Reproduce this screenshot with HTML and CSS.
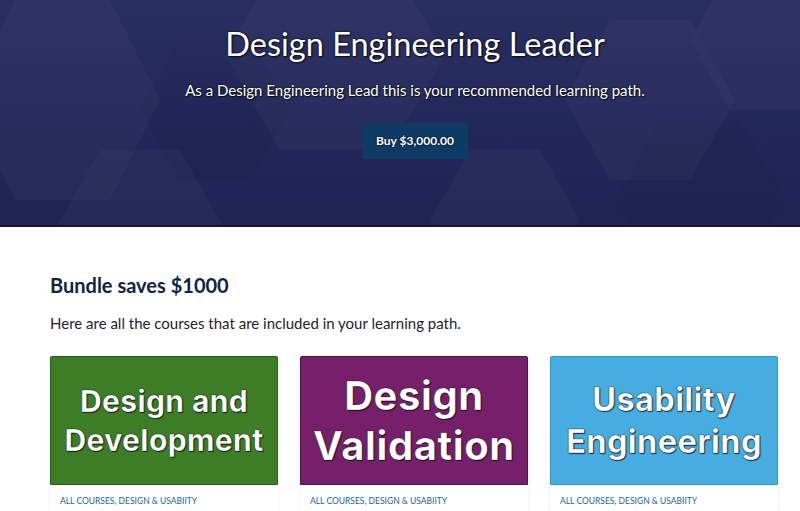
FILE: index.html
```html
<!DOCTYPE html>
<html lang="en">
<head>
<meta charset="utf-8">
<title>Design Engineering Leader</title>
<link rel="stylesheet" href="styles.css">
</head>
<body>
<header class="hero">
  <svg class="hero-bg" width="800" height="226" viewBox="0 0 800 226" aria-hidden="true">
    <g fill="#ffffff" fill-opacity="0.022">
      <polygon points="15,0 110,0 160,100 110,200 15,200 -35,100"/>
      <polygon points="280,-40 390,-40 445,55 390,150 280,150 225,55"/>
      <polygon points="100,150 180,150 225,230 180,310 100,310 55,230"/>
      <polygon points="610,20 690,20 735,100 690,180 610,180 565,100"/>
      <polygon points="470,150 540,150 580,220 540,290 470,290 430,220"/>
      <polygon points="730,-30 800,-30 840,40 800,110 730,110 690,40"/>
    </g>
    <g fill="#000000" fill-opacity="0.035">
      <polygon points="180,40 250,40 290,110 250,180 180,180 140,110"/>
      <polygon points="660,120 740,120 785,200 740,280 660,280 615,200"/>
    </g>
  </svg>
  <div class="hero-inner">
    <h1 class="hero-title">Design Engineering Leader</h1>
    <p class="hero-sub">As a Design Engineering Lead this is your recommended learning path.</p>
    <a class="buy-btn" href="#">Buy $3,000.00</a>
  </div>
</header>

<main class="content">
  <h2 class="bundle-title">Bundle saves $1000</h2>
  <p class="bundle-text">Here are all the courses that are included in your learning path.</p>

  <div class="cards">
    <article class="card">
      <div class="card-img green"><span class="img-text t1">Design and<br>Development</span></div>
      <div class="card-body"><a class="cat" href="#">ALL COURSES, DESIGN &amp; USABIITY</a></div>
    </article>
    <article class="card">
      <div class="card-img purple"><span class="img-text t2">Design<br>Validation</span></div>
      <div class="card-body"><a class="cat" href="#">ALL COURSES, DESIGN &amp; USABIITY</a></div>
    </article>
    <article class="card">
      <div class="card-img blue"><span class="img-text t3">Usability<br>Engineering</span></div>
      <div class="card-body"><a class="cat" href="#">ALL COURSES, DESIGN &amp; USABIITY</a></div>
    </article>
  </div>
</main>
</body>
</html>
```

FILE: styles.css
```css
* { box-sizing: border-box; }
html, body { margin: 0; padding: 0; }
body {
  font-family: Lato, "Liberation Sans", sans-serif;
  background: #ffffff;
  color: #1b2533;
  overflow: hidden;
}

.hero {
  position: relative;
  height: 227px;
  background: linear-gradient(180deg, #2a2f62 0%, #23285a 55%, #1f2453 100%);
  border-bottom: 2px solid #14173a;
  overflow: hidden;
}
.hero-bg {
  position: absolute;
  left: 0;
  top: 0;
}
.hero-inner {
  position: relative;
  display: flex;
  flex-direction: column;
  align-items: center;
  padding-top: 24px;
  padding-left: 30px;
}
.hero-title {
  margin: 0;
  font-weight: 400;
  font-size: 32.5px;
  line-height: 40px;
  color: #ffffff;
  text-shadow: 0 0 2px #000, 1px 1px 2px rgba(0,0,0,0.7);
}
.hero-sub {
  margin: 15px 0 0;
  font-size: 15px;
  line-height: 22px;
  color: #ffffff;
  text-shadow: 0 0 2px #000, 1px 1px 1px rgba(0,0,0,0.6);
}
.buy-btn {
  margin-top: 22px;
  display: block;
  width: 105px;
  height: 36px;
  line-height: 36px;
  text-align: center;
  background: #0e3a66;
  color: #ffffff;
  font-weight: 700;
  font-size: 12px;
  text-decoration: none;
  text-shadow: 0 0 2px #000;
}

.content {
  padding: 46px 21px 0 50px;
}
.bundle-title {
  margin: 0;
  font-size: 20px;
  line-height: 24px;
  font-weight: 700;
  color: #0f2442;
}
.bundle-text {
  margin: 15px 0 0;
  font-size: 15px;
  line-height: 22px;
  color: #1b2533;
}

.cards {
  margin-top: 22px;
  display: grid;
  grid-template-columns: repeat(3, 228px);
  column-gap: 22px;
}
.card {
  background: #ffffff;
  box-shadow: 0 0 2px rgba(0,0,0,0.12);
  border-radius: 2px;
}
.card-img {
  height: 129px;
  display: flex;
  align-items: center;
  justify-content: center;
  text-align: center;
  border-radius: 2px 2px 0 0;
}
.green { background: #3c7d25; border: 1px solid #2b5c1a; }
.purple { background: #76206b; border: 1px solid #4f1547; }
.blue { background: #45addf; border: 1px solid #2f96cc; }

.img-text {
  font-family: Inter, "Noto Sans", sans-serif;
  font-weight: 700;
  color: #ffffff;
  -webkit-text-stroke: 0.4px rgba(0,0,0,0.5);
  text-shadow: 1px 1px 1px rgba(0,0,0,0.6), 0 0 1px rgba(0,0,0,0.8);
}
.t1 { font-size: 30px; line-height: 39px; letter-spacing: 0.4px; }
.t2 { font-size: 40px; line-height: 50px; letter-spacing: 0.6px; }
.t3 { font-size: 32.5px; line-height: 42px; letter-spacing: 0.4px; }

.card-body {
  padding: 10px 10px 10px;
  height: 40px;
  font-size: 8.5px;
  line-height: 12px;
}
.cat {
  font-size: 8.5px;
  color: #1565a8;
  text-decoration: none;
}
```
